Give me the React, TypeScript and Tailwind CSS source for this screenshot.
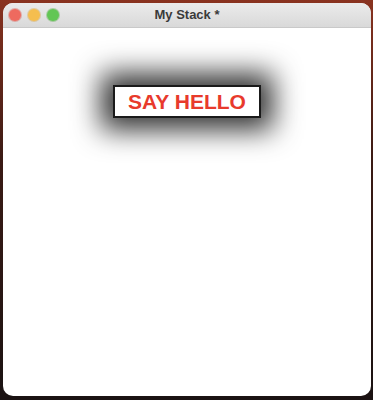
export default function App() {
  return (
    <div className="h-[400px] w-[373px] bg-[linear-gradient(180deg,#8a3320_0%,#3a1a14_40%,#1a1212_100%)] p-[3px] pb-[4px] pr-[2px]">
      <div className="flex h-full w-full flex-col overflow-hidden rounded-[10px] bg-white">
        {/* Title bar */}
        <div className="relative flex h-[25px] shrink-0 items-center border-b border-[#c9c9c9] bg-[linear-gradient(180deg,#ebebeb,#d9d9d9)] px-[6px]">
          <div className="flex gap-[7px]">
            <span className="h-[12px] w-[12px] rounded-full bg-[#ee6a5f] ring-1 ring-[#d9574d]/40" />
            <span className="h-[12px] w-[12px] rounded-full bg-[#f5be4f] ring-1 ring-[#d9a23c]/40" />
            <span className="h-[12px] w-[12px] rounded-full bg-[#62c654] ring-1 ring-[#4fa742]/40" />
          </div>
          <div className="absolute inset-0 flex items-center justify-center text-[13px] font-bold text-[#3a3a3a] [font-family:'Liberation_Sans',sans-serif]">
            My Stack *
          </div>
        </div>

        {/* Content */}
        <div className="flex flex-1 flex-col items-center pt-[57px]">
          <button className="flex h-[33px] w-[148px] items-center justify-center border-2 border-[#1a1a1a] bg-white text-[21px] font-bold text-[#e83a2c] shadow-[0_0_28px_12px_rgba(0,0,0,0.8)] [font-family:'Liberation_Sans',sans-serif]">
            SAY HELLO
          </button>
        </div>
      </div>
    </div>
  );
}
